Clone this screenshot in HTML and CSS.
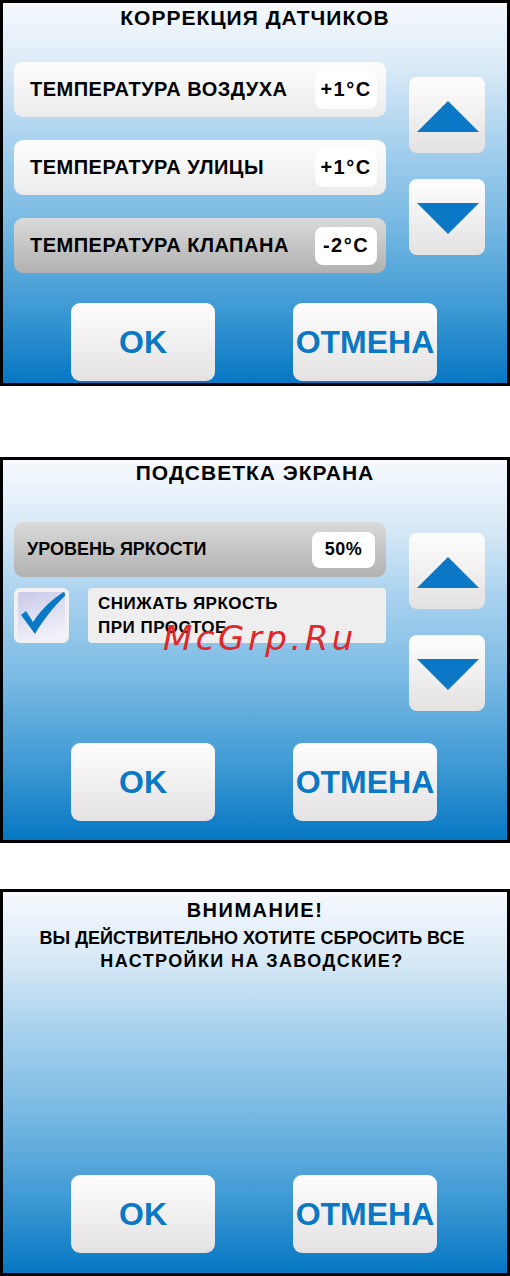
FILE: index.html
```html
<!DOCTYPE html>
<html lang="ru">
<head>
  <meta charset="UTF-8">
  <meta name="viewport" content="width=device-width, initial-scale=1">
  <title>Настройки</title>
  <link rel="stylesheet" href="styles.css">
</head>
<body>

<!-- коррекция датчиков -->
<section class="panel panel-sensors">
  <h2 class="title">КОРРЕКЦИЯ ДАТЧИКОВ</h2>
  <div class="content">
    <div class="rows">
      <div class="row"><span>ТЕМПЕРАТУРА ВОЗДУХА</span><span class="value">+1°C</span></div>
      <div class="row"><span>ТЕМПЕРАТУРА УЛИЦЫ</span><span class="value">+1°C</span></div>
      <div class="row active"><span>ТЕМПЕРАТУРА КЛАПАНА</span><span class="value">-2°C</span></div>
    </div>
    <div class="arrows">
      <button class="arrow"><svg viewBox="0 0 76 76"><polygon points="39,24 70,55 8,55"/></svg></button>
      <button class="arrow"><svg viewBox="0 0 76 76"><polygon points="8,24 70,24 39,55"/></svg></button>
    </div>
  </div>
  <div class="actions">
    <button class="btn">OK</button>
    <button class="btn">ОТМЕНА</button>
  </div>
</section>

<!-- подсветка -->
<section class="panel panel-backlight">
  <h2 class="title">ПОДСВЕТКА ЭКРАНА</h2>
  <div class="content">
    <div class="rows">
      <div class="row active"><span>УРОВЕНЬ ЯРКОСТИ</span><span class="value">50%</span></div>
      <div class="check-row">
        <div class="checkbox">
          <svg viewBox="0 0 55 55"><path d="M7 27 L12 23 L19 34 C28 20 40 10 51 3 L53 6 C41 17 30 31 21 46 Z"/></svg>
        </div>
        <div class="check-label">СНИЖАТЬ ЯРКОСТЬ<br>ПРИ ПРОСТОЕ</div>
      </div>
    </div>
    <div class="arrows">
      <button class="arrow"><svg viewBox="0 0 76 76"><polygon points="39,24 70,55 8,55"/></svg></button>
      <button class="arrow"><svg viewBox="0 0 76 76"><polygon points="8,24 70,24 39,55"/></svg></button>
    </div>
  </div>
  <div class="actions">
    <button class="btn">OK</button>
    <button class="btn">ОТМЕНА</button>
  </div>
  <div class="watermark">McGrp.Ru</div>
</section>

<!-- сброс настроек -->
<section class="panel panel-reset">
  <h2 class="title">ВНИМАНИЕ!</h2>
  <p class="message">ВЫ ДЕЙСТВИТЕЛЬНО ХОТИТЕ СБРОСИТЬ ВСЕ<br><span class="wide">НАСТРОЙКИ НА ЗАВОДСКИЕ?</span></p>
  <div class="actions">
    <button class="btn">OK</button>
    <button class="btn">ОТМЕНА</button>
  </div>
</section>

</body>
</html>
```

FILE: styles.css
```css
* {
  box-sizing: border-box;
}
body {
  margin: 0;
  background: #fff;
  font-family: "Liberation Sans", Arial, sans-serif;
  font-weight: bold;
  color: #000;
}

.panel {
  position: relative;
  height: 386px;
  border: 3px solid #000;
  background: linear-gradient(#f6f9fd 0%, #dcebf7 16%, #abd3ef 35%, #78b9e3 58%, #3f9ad4 80%, #0677c3 100%);
  display: flex;
  flex-direction: column;
}
.panel-sensors {
  margin-bottom: 71px;
}
.panel-backlight {
  margin-bottom: 46px;
}
.panel-reset {
  height: 387px;
}

.title {
  margin: 0;
  padding-top: 3px;
  font-size: 21px;
  line-height: 24px;
  letter-spacing: 1px;
  text-align: center;
}

.content {
  display: flex;
  gap: 23px;
  padding-left: 11px;
  margin-top: 32px;
}
.rows {
  width: 372px;
  display: flex;
  flex-direction: column;
  gap: 23px;
}
.row {
  height: 55px;
  border-radius: 9px;
  display: flex;
  align-items: center;
  justify-content: space-between;
  padding: 0 9px 0 16px;
  background: linear-gradient(#fefefe, #ebebeb);
  font-size: 20px;
  letter-spacing: 0.5px;
}
.row.active {
  background: linear-gradient(#dadada, #b1b1b1);
}
.value {
  width: 62px;
  height: 38px;
  border-radius: 8px;
  background: #fff;
  display: flex;
  align-items: center;
  justify-content: center;
  letter-spacing: 1.5px;
}

.arrows {
  display: flex;
  flex-direction: column;
  gap: 26px;
  padding-top: 15px;
}
.arrow {
  width: 76px;
  height: 76px;
  padding: 0;
  border: 0;
  border-radius: 8px;
  background: linear-gradient(#fffefe, #e3e1e1);
}
.arrow svg {
  display: block;
  width: 76px;
  height: 76px;
  fill: #0a78c4;
}

.actions {
  margin-top: auto;
  padding: 0 0 2px 68px;
  display: flex;
  gap: 78px;
}
.btn {
  width: 144px;
  height: 78px;
  padding: 0;
  border: 0;
  border-radius: 9px;
  background: linear-gradient(#fffefe, #e3e1e1);
  color: #0a78c4;
  font-family: "Liberation Sans", Arial, sans-serif;
  font-weight: bold;
  font-size: 32px;
}

/* подсветка */
.panel-backlight .title {
  padding-top: 1px;
}
.panel-backlight .content {
  margin-top: 37px;
}
.panel-backlight .rows {
  gap: 11px;
}
.panel-backlight .row {
  font-size: 18px;
  letter-spacing: 0;
  padding: 0 11px 0 13px;
}
.panel-backlight .value {
  width: 63px;
  height: 36px;
  letter-spacing: 0.5px;
}
.panel-backlight .arrows {
  padding-top: 11px;
}
.panel-backlight .actions {
  padding-bottom: 19px;
}
.panel-reset .actions {
  padding-bottom: 20px;
}

.check-row {
  display: flex;
  gap: 19px;
}
.checkbox {
  width: 55px;
  height: 55px;
  border: 4px solid #f1f1f3;
  border-radius: 6px;
  background: linear-gradient(160deg, #c9c9e8, #f6f6fc);
  overflow: hidden;
}
.checkbox svg {
  display: block;
  width: 55px;
  height: 55px;
  margin: -4px;
  fill: #0a78c4;
}
.check-label {
  width: 298px;
  height: 55px;
  border-radius: 4px;
  background: #eeeeee;
  padding: 4px 10px;
  font-size: 17px;
  line-height: 24px;
  letter-spacing: 0.5px;
}

.watermark {
  position: absolute;
  left: 160px;
  top: 161px;
  font-family: "DejaVu Sans", sans-serif;
  font-style: italic;
  font-weight: normal;
  font-size: 34px;
  line-height: 1;
  letter-spacing: 3.5px;
  color: #e0282a;
}

/* сброс */
.panel-reset .title {
  padding-top: 6px;
  font-size: 20px;
  letter-spacing: 1.5px;
}
.message {
  margin: 5px 6px 0 0;
  font-size: 18px;
  line-height: 23px;
  text-align: center;
}
.message .wide {
  letter-spacing: 1.4px;
}
```
